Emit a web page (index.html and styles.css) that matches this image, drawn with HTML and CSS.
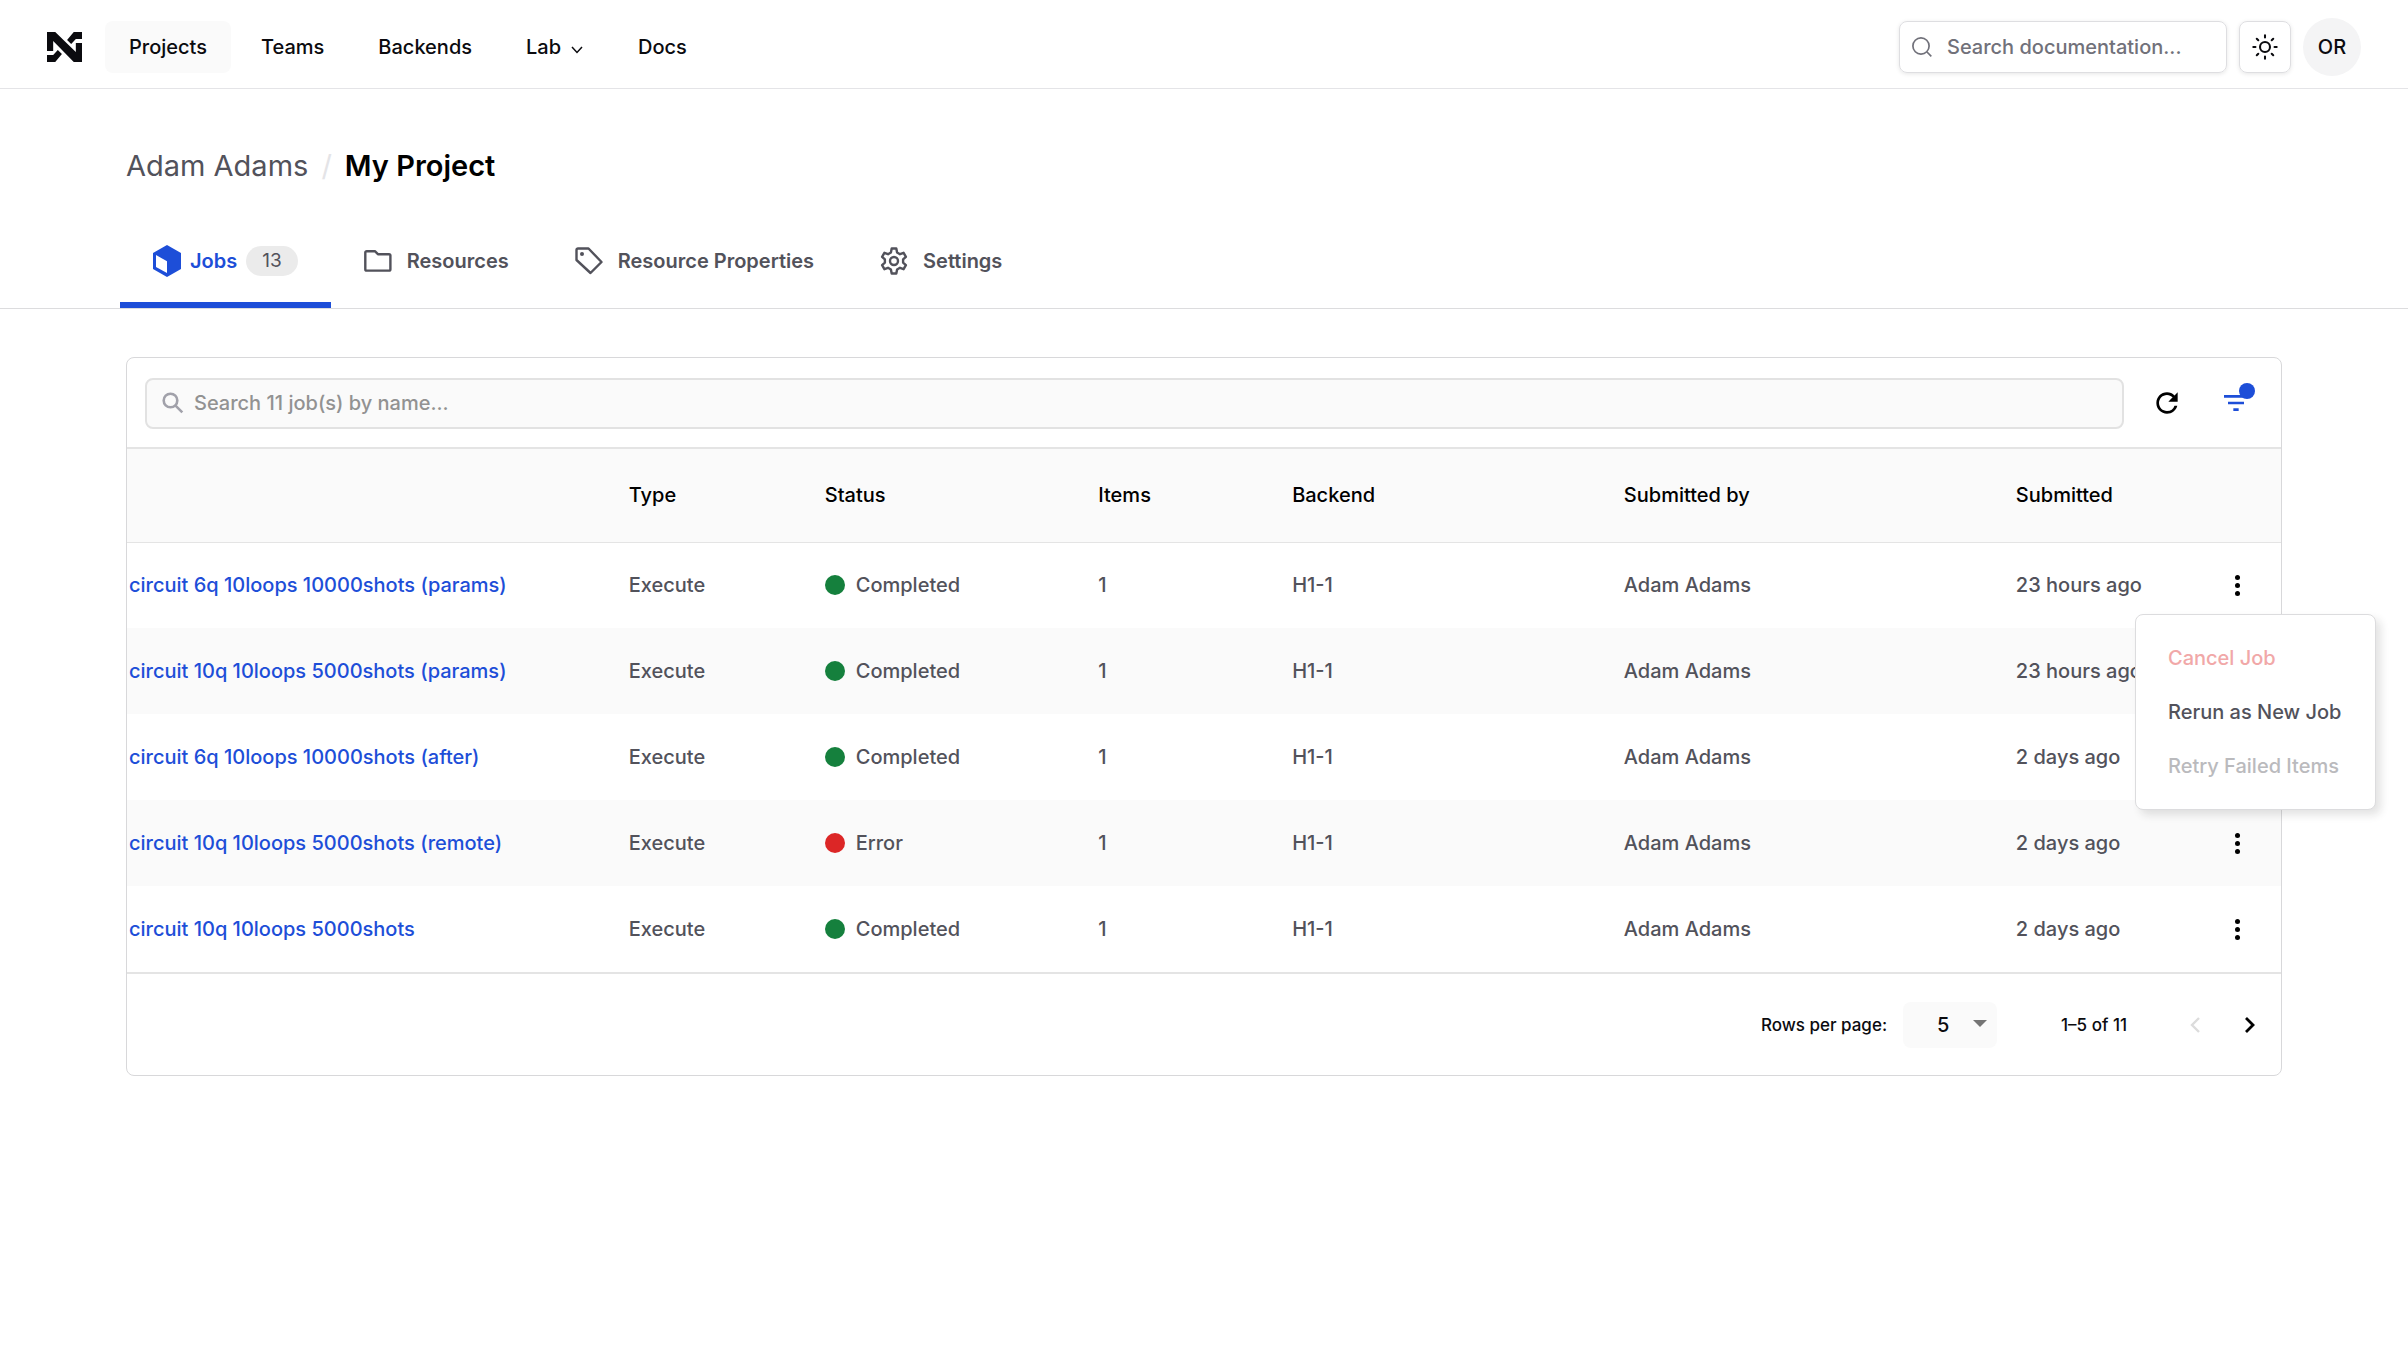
FILE: index.html
```
<!DOCTYPE html>
<html lang="en">
<head>
    <meta charset="UTF-8">
    <meta name="viewport" content="width=device-width, initial-scale=1.0">
    <title>My Project - Jobs</title>
    <link rel="stylesheet" href="styles.css">
</head>
<body>
    <header class="topbar">
        <a href="#" class="logo" aria-label="Home">
            <svg width="35" height="30" viewBox="0 0 34 30" preserveAspectRatio="none" fill="#0b0b0f">
                <path d="M0 0h8l20 20V11h6v19h-8L6 9v10H0z"/>
                <path d="M26 0h8v7h-6l-4.500 5-4-4z"/>
                <path d="M8 30H0v-7h6l4.500-5 4 4z"/>
            </svg>
        </a>
        <nav class="nav">
            <a href="#" class="active">Projects</a>
            <a href="#">Teams</a>
            <a href="#">Backends</a>
            <a href="#">Lab
                <svg width="14" height="14" viewBox="0 0 14 14" fill="none" stroke="currentColor" stroke-width="1.5"><path d="M2 4l5 5.500L12 4"/></svg>
            </a>
            <a href="#">Docs</a>
        </nav>
        <div class="tools">
            <label class="doc-search">
                <svg width="20" height="20" viewBox="0 0 20 20" fill="none" stroke="currentColor" stroke-width="1.700"><circle cx="9" cy="9" r="8.100"/><path d="M15 15l4.300 4.300"/></svg>
                <input type="search" placeholder="Search documentation..." aria-label="Search documentation">
            </label>
            <button class="theme" aria-label="Toggle theme">
                <svg width="26" height="26" viewBox="0 0 24 24" fill="none" stroke="currentColor" stroke-width="1.900" stroke-linecap="round"><circle cx="12" cy="12" r="4.600"/><path d="M12 1.200v2M12 20.800v2M1.200 12h2M20.800 12h2M4.400 4.400l1.400 1.400M18.200 18.200l1.400 1.400M4.400 19.600l1.400-1.400M18.200 5.800l1.400-1.400"/></svg>
            </button>
            <button class="avatar" aria-label="Account">OR</button>
        </div>
    </header>

    <div class="breadcrumb">
        <a href="#">Adam Adams</a>
        <span class="slash">/</span>
        <h1>My Project</h1>
    </div>

    <nav class="tabs">
        <a href="#" class="active">
            <svg width="28" height="32" viewBox="0 0 28 32"><path fill="currentColor" d="M14 0l14 8v16l-14 8L0 24V8z"/><path fill="#fff" d="M3 10l11 6.200V28L3 22z"/></svg>
            Jobs
            <span class="count">13</span>
        </a>
        <a href="#">
            <svg width="28" height="22" viewBox="0 0 28 22" fill="none" stroke="currentColor" stroke-width="2.400" stroke-linejoin="round"><path d="M2.700 1.200h8.200l3 3H25a1.400 1.400 0 0 1 1.400 1.400v13.600a1.400 1.400 0 0 1-1.400 1.400H2.700a1.400 1.400 0 0 1-1.400-1.400V2.600a1.400 1.400 0 0 1 1.400-1.400z"/></svg>
            Resources
        </a>
        <a href="#">
            <svg width="28" height="28" viewBox="0 0 28 28" fill="none" stroke="currentColor" stroke-width="2.400" stroke-linejoin="round"><path d="M3 1.500h10.500L26.500 15 15.500 26 1.500 13V3A1.500 1.500 0 0 1 3 1.500z"/><circle cx="7" cy="7" r="2" fill="currentColor" stroke="none"/></svg>
            Resource Properties
        </a>
        <a href="#">
            <svg width="28" height="28" viewBox="0 0 28 28" fill="none" stroke="currentColor" stroke-width="2.400" stroke-linejoin="round"><path d="M11.700 1.500h4.600l.8 4 2.900 1.700 3.600-1.400 2.300 4-2.800 2.600v3.200l2.800 2.600-2.300 4L20 20.800l-2.900 1.700-.8 4h-4.600l-.8-4L8 20.800l-3.600 1.400-2.300-4 2.800-2.600v-3.200L2.100 9.800l2.300-4L8 7.200l2.900-1.700z"/><circle cx="14" cy="14" r="4"/></svg>
            Settings
        </a>
    </nav>

    <main class="card">
        <div class="toolbar">
            <label class="job-search">
                <svg width="22" height="22" viewBox="0 0 22 22" fill="none" stroke="currentColor" stroke-width="2.600"><circle cx="8.500" cy="8.500" r="6.800"/><path d="M13.300 13.300l7 7"/></svg>
                <input type="search" placeholder="Search 11 job(s) by name..." aria-label="Search jobs">
            </label>
            <button class="icon" aria-label="Refresh">
                <svg width="32" height="32" viewBox="0 0 24 24" fill="currentColor"><path d="M17.650 6.350A7.958 7.958 0 0 0 12 4c-4.420 0-7.990 3.580-7.990 8s3.570 8 7.990 8c3.730 0 6.840-2.550 7.730-6h-2.080A5.990 5.990 0 0 1 12 18c-3.310 0-6-2.690-6-6s2.690-6 6-6c1.660 0 3.140.690 4.220 1.780L13 11h7V4z"/></svg>
            </button>
            <button class="icon filter" aria-label="Filter">
                <svg width="32" height="32" viewBox="0 0 24 24" fill="currentColor"><path d="M10 18h4v-2h-4zM3 6v2h18V6zm3 7h12v-2H6z"/></svg>
                <span class="dot"></span>
            </button>
        </div>

        <table>
            <colgroup>
                <col class="c-name"><col class="c-type"><col class="c-status"><col class="c-items"><col class="c-backend"><col class="c-by"><col class="c-date"><col class="c-menu">
            </colgroup>
            <thead>
                <tr><th></th><th>Type</th><th>Status</th><th>Items</th><th>Backend</th><th>Submitted by</th><th>Submitted</th><th></th></tr>
            </thead>
            <tbody>
                <tr>
                    <td><a href="#">circuit 6q 10loops 10000shots (params)</a></td><td>Execute</td><td><span class="status">Completed</span></td><td>1</td><td>H1-1</td><td>Adam Adams</td><td>23 hours ago</td>
                    <td class="actions">
                        <button class="kebab" aria-label="Job actions"></button>
                        <div class="menu">
                            <button class="danger" disabled>Cancel Job</button>
                            <button>Rerun as New Job</button>
                            <button disabled>Retry Failed Items</button>
                        </div>
                    </td>
                </tr>
                <tr><td><a href="#">circuit 10q 10loops 5000shots (params)</a></td><td>Execute</td><td><span class="status">Completed</span></td><td>1</td><td>H1-1</td><td>Adam Adams</td><td>23 hours ago</td><td class="actions"><button class="kebab" aria-label="Job actions"></button></td></tr>
                <tr><td><a href="#">circuit 6q 10loops 10000shots (after)</a></td><td>Execute</td><td><span class="status">Completed</span></td><td>1</td><td>H1-1</td><td>Adam Adams</td><td>2 days ago</td><td class="actions"><button class="kebab" aria-label="Job actions"></button></td></tr>
                <tr><td><a href="#">circuit 10q 10loops 5000shots (remote)</a></td><td>Execute</td><td><span class="status error">Error</span></td><td>1</td><td>H1-1</td><td>Adam Adams</td><td>2 days ago</td><td class="actions"><button class="kebab" aria-label="Job actions"></button></td></tr>
                <tr><td><a href="#">circuit 10q 10loops 5000shots</a></td><td>Execute</td><td><span class="status">Completed</span></td><td>1</td><td>H1-1</td><td>Adam Adams</td><td>2 days ago</td><td class="actions"><button class="kebab" aria-label="Job actions"></button></td></tr>
            </tbody>
        </table>

        <div class="pagination">
            <label for="rows">Rows per page:</label>
            <div class="select">
                <select id="rows"><option>5</option><option>10</option><option>25</option></select>
                <svg width="14" height="7" viewBox="0 0 14 7" fill="#757575"><path d="M0 0h14L7 7z"/></svg>
            </div>
            <span class="range">1–5 of 11</span>
            <button class="page" aria-label="Previous page" disabled>
                <svg width="10" height="16" viewBox="0 0 10 16" fill="none" stroke="currentColor" stroke-width="2.400"><path d="M9 1L2 8l7 7"/></svg>
            </button>
            <button class="page" aria-label="Next page">
                <svg width="10" height="16" viewBox="0 0 10 16" fill="none" stroke="currentColor" stroke-width="2.800"><path d="M1 1l7 7-7 7"/></svg>
            </button>
        </div>
    </main>
</body>
</html>
```
FILE: styles.css
```
* {
    box-sizing: border-box;
}
body {
    margin: 0;
    font-family: Inter, "Liberation Sans", sans-serif;
    font-size: 20px;
    font-weight: 500;
    line-height: 28px;
    color: #0b0b0f;
    background: #fff;
}
a {
    color: inherit;
    text-decoration: none;
}
button, input, select {
    font: inherit;
    color: inherit;
    border: none;
    background: none;
    margin: 0;
    padding: 0;
    outline: none;
}
button {
    cursor: pointer;
}
svg {
    display: block;
    flex: none;
}

/* header */
.topbar {
    display: flex;
    align-items: center;
    height: 89px;
    padding: 6px 47px 0;
    border-bottom: 1px solid #e4e4e7;
}
.nav {
    display: flex;
    gap: 6px;
    margin-left: 23px;
}
.nav a {
    display: flex;
    align-items: center;
    gap: 9px;
    height: 52px;
    padding: 0 24px;
    border-radius: 8px;
}
.nav .active {
    background: #fafafa;
}
.nav svg {
    margin-top: 5px;
}
.tools {
    display: flex;
    align-items: center;
    gap: 12px;
    margin-left: auto;
}
.doc-search {
    display: flex;
    align-items: center;
    gap: 15px;
    width: 328px;
    height: 52px;
    padding: 0 12px;
    border: 1px solid #dedee1;
    border-radius: 8px;
    box-shadow: 0 1px 4px rgba(0,0,0,0.1);
    color: #71717a;
}
.doc-search input {
    flex: 1;
    min-width: 0;
}
::placeholder {
    color: inherit;
    opacity: 1;
}
.theme {
    display: flex;
    align-items: center;
    justify-content: center;
    width: 52px;
    height: 52px;
    border: 1px solid #dedee1;
    border-radius: 8px;
    box-shadow: 0 1px 4px rgba(0,0,0,0.1);
}
.avatar {
    width: 58px;
    height: 58px;
    border-radius: 50%;
    background: #f4f4f5;
}

/* title */
.breadcrumb {
    display: flex;
    align-items: center;
    gap: 13px;
    padding: 56px 126px 0;
    font-size: 29px;
    line-height: 42px;
}
.breadcrumb a {
    font-weight: 400;
    color: #52525b;
}
.breadcrumb .slash {
    font-weight: 400;
    color: #e4e4e7;
}
.breadcrumb h1 {
    margin: 0;
    font-size: inherit;
    font-weight: 600;
    color: #000;
}

/* tabs */
.tabs {
    display: flex;
    padding: 27px 120px 0;
    border-bottom: 1px solid #dcdcde;
}
.tabs a {
    display: flex;
    align-items: center;
    gap: 15px;
    height: 94px;
    padding: 0 33px;
    font-weight: 600;
    color: #52525b;
}
.tabs .active {
    gap: 9px;
    border-bottom: 6px solid #1d4ed8;
    padding-top: 6px;
    color: #1d4ed8;
}
.count {
    padding: 0 16px;
    line-height: 30px;
    border-radius: 15px;
    background: #ebebeb;
    font-size: 19px;
    font-weight: 400;
    color: #52525b;
}

/* jobs table */
.card {
    margin: 48px 126px;
    border: 1px solid #d8d8da;
    border-radius: 8px;
}
.toolbar {
    display: flex;
    align-items: center;
    gap: 17px;
    padding: 19px 19px 18px 18px;
    border-bottom: 2px solid #e4e4e4;
}
.job-search {
    display: flex;
    flex: 1;
    align-items: center;
    gap: 10px;
    height: 51px;
    padding: 0 15px;
    border: 2px solid #e2e2e2;
    border-radius: 8px;
    background: #fafafa;
    color: #a1a1aa;
}
.job-search input {
    flex: 1;
    color: #929292;
}
.icon {
    display: flex;
    align-items: center;
    justify-content: center;
    width: 52px;
    height: 52px;
    color: #000;
}
.filter {
    position: relative;
    color: #1d4ed8;
}
.dot {
    position: absolute;
    top: 6px;
    right: 7px;
    width: 16px;
    height: 16px;
    border-radius: 50%;
    background: #1d4ed8;
}
table {
    width: 100%;
    border-collapse: collapse;
    table-layout: fixed;
}
.c-name { width: 23.2%; }
.c-type { width: 9.1%; }
.c-status { width: 12.7%; }
.c-items { width: 9%; }
.c-backend { width: 15.4%; }
.c-by { width: 18.2%; }
.c-date { width: 8%; }
th, td {
    padding: 0 2px;
    text-align: left;
    white-space: nowrap;
}
th {
    height: 93px;
    border-bottom: 1px solid #e4e4e4;
    background: #fafafa;
    font-weight: 500;
    color: #000;
}
td {
    height: 86px;
    color: #52525b;
}
tbody tr:nth-child(even) {
    background: #fafafa;
}
td a {
    color: #1d4ed8;
}
.status {
    display: flex;
    align-items: center;
    gap: 11px;
}
.status::before {
    content: "";
    width: 20px;
    height: 20px;
    border-radius: 50%;
    background: #15803d;
}
.error::before {
    background: #dc2626;
}
.actions {
    position: relative;
}
.kebab {
    display: flex;
    align-items: center;
    justify-content: center;
    width: 40px;
    height: 40px;
    margin: 0 22px 0 auto;
}
.kebab::before {
    content: "";
    width: 5px;
    height: 5px;
    border-radius: 50%;
    background: #000;
    box-shadow: 0 -8px #000, 0 8px #000;
}
.menu {
    position: absolute;
    z-index: 1;
    top: 71px;
    right: -95px;
    width: 241px;
    padding: 16px 0;
    border: 1px solid #dcdcde;
    border-radius: 8px;
    background: #fff;
    box-shadow: 5px 5px 8px rgba(24,24,27,0.12);
}
.menu button {
    display: block;
    width: 100%;
    height: 54px;
    padding: 0 32px;
    text-align: left;
    color: #52525b;
}
.menu button:disabled {
    color: #bababd;
}
.menu .danger:disabled {
    color: #f1a8a8;
}

/* pagination */
.pagination {
    display: flex;
    align-items: center;
    justify-content: flex-end;
    height: 103px;
    padding-right: 4px;
    border-top: 2px solid #e4e4e4;
    font-size: 17px;
}
.select {
    position: relative;
    margin: 0 64px 0 16px;
}
.select select {
    width: 94px;
    height: 46px;
    padding-left: 34px;
    border-radius: 8px;
    background: #fafafa;
    appearance: none;
    font-size: 20px;
}
.select svg {
    position: absolute;
    top: 18px;
    right: 10px;
    pointer-events: none;
}
.range {
    margin-right: 40px;
}
.page {
    display: flex;
    align-items: center;
    justify-content: center;
    width: 55px;
    height: 40px;
    color: #000;
}
.page:disabled {
    color: #dcdcdc;
}
```
